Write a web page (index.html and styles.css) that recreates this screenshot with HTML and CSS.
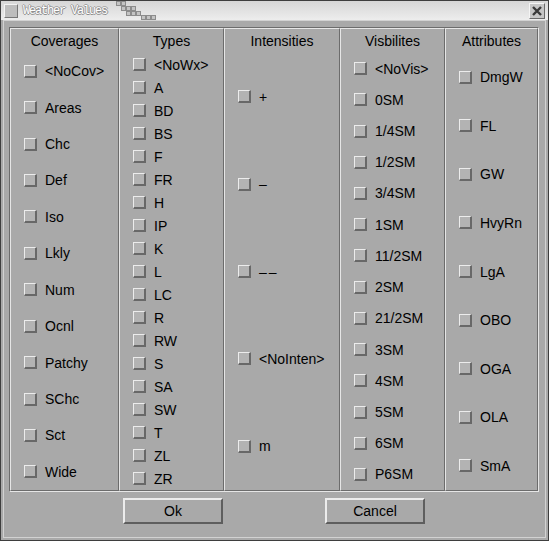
FILE: index.html
```html
<!DOCTYPE html>
<html>
<head>
  <title>Weather Values</title>
  <meta charset="UTF-8">
  <link rel="stylesheet" href="styles.css">
</head>
<body>
  <div class="window">
    <div class="titlebar">
      <span class="win-icon"></span>
      <span class="title">Weather Values</span>
      <svg class="grip" width="40" height="19" viewBox="0 0 40 19">
        <g fill="#c4c4c4" stroke="#8c8c8c" stroke-width="1">
          <rect x="0.5" y="0.5" width="4" height="4"/>
          <rect x="5.5" y="0.5" width="4" height="4"/>
          <rect x="5.5" y="5.5" width="4" height="4"/>
          <rect x="10.5" y="5.5" width="4" height="4"/>
          <rect x="15.5" y="5.5" width="4" height="4"/>
          <rect x="10.5" y="10.5" width="4" height="4"/>
          <rect x="15.5" y="10.5" width="4" height="4"/>
          <rect x="20.5" y="10.5" width="4" height="4"/>
          <rect x="25.5" y="14.5" width="4" height="4"/>
          <rect x="30.5" y="14.5" width="4" height="4"/>
          <rect x="35.5" y="14.5" width="4" height="4"/>
        </g>
      </svg>
      <span class="close">
        <svg width="12" height="12" viewBox="0 0 12 12">
          <path d="M2 2 L10 10 M10 2 L2 10" stroke="#3a3a3a" stroke-width="2.4"/>
        </svg>
      </span>
    </div>

    <div class="client">
      <div class="groups">
        <div class="group col-cov">
          <div class="group-title">Coverages</div>
          <div class="items">
            <label class="item"><span class="check"></span>&lt;NoCov&gt;</label>
            <label class="item"><span class="check"></span>Areas</label>
            <label class="item"><span class="check"></span>Chc</label>
            <label class="item"><span class="check"></span>Def</label>
            <label class="item"><span class="check"></span>Iso</label>
            <label class="item"><span class="check"></span>Lkly</label>
            <label class="item"><span class="check"></span>Num</label>
            <label class="item"><span class="check"></span>Ocnl</label>
            <label class="item"><span class="check"></span>Patchy</label>
            <label class="item"><span class="check"></span>SChc</label>
            <label class="item"><span class="check"></span>Sct</label>
            <label class="item"><span class="check"></span>Wide</label>
          </div>
        </div>

        <div class="group col-types">
          <div class="group-title">Types</div>
          <div class="items">
            <label class="item"><span class="check"></span>&lt;NoWx&gt;</label>
            <label class="item"><span class="check"></span>A</label>
            <label class="item"><span class="check"></span>BD</label>
            <label class="item"><span class="check"></span>BS</label>
            <label class="item"><span class="check"></span>F</label>
            <label class="item"><span class="check"></span>FR</label>
            <label class="item"><span class="check"></span>H</label>
            <label class="item"><span class="check"></span>IP</label>
            <label class="item"><span class="check"></span>K</label>
            <label class="item"><span class="check"></span>L</label>
            <label class="item"><span class="check"></span>LC</label>
            <label class="item"><span class="check"></span>R</label>
            <label class="item"><span class="check"></span>RW</label>
            <label class="item"><span class="check"></span>S</label>
            <label class="item"><span class="check"></span>SA</label>
            <label class="item"><span class="check"></span>SW</label>
            <label class="item"><span class="check"></span>T</label>
            <label class="item"><span class="check"></span>ZL</label>
            <label class="item"><span class="check"></span>ZR</label>
          </div>
        </div>

        <div class="group col-int">
          <div class="group-title">Intensities</div>
          <div class="items">
            <label class="item"><span class="check"></span>+</label>
            <label class="item"><span class="check"></span>–</label>
            <label class="item"><span class="check"></span><span class="dashes">––</span></label>
            <label class="item"><span class="check"></span>&lt;NoInten&gt;</label>
            <label class="item"><span class="check"></span>m</label>
          </div>
        </div>

        <div class="group col-vis">
          <div class="group-title">Visbilites</div>
          <div class="items">
            <label class="item"><span class="check"></span>&lt;NoVis&gt;</label>
            <label class="item"><span class="check"></span>0SM</label>
            <label class="item"><span class="check"></span>1/4SM</label>
            <label class="item"><span class="check"></span>1/2SM</label>
            <label class="item"><span class="check"></span>3/4SM</label>
            <label class="item"><span class="check"></span>1SM</label>
            <label class="item"><span class="check"></span>11/2SM</label>
            <label class="item"><span class="check"></span>2SM</label>
            <label class="item"><span class="check"></span>21/2SM</label>
            <label class="item"><span class="check"></span>3SM</label>
            <label class="item"><span class="check"></span>4SM</label>
            <label class="item"><span class="check"></span>5SM</label>
            <label class="item"><span class="check"></span>6SM</label>
            <label class="item"><span class="check"></span>P6SM</label>
          </div>
        </div>

        <div class="group col-attr">
          <div class="group-title">Attributes</div>
          <div class="items">
            <label class="item"><span class="check"></span>DmgW</label>
            <label class="item"><span class="check"></span>FL</label>
            <label class="item"><span class="check"></span>GW</label>
            <label class="item"><span class="check"></span>HvyRn</label>
            <label class="item"><span class="check"></span>LgA</label>
            <label class="item"><span class="check"></span>OBO</label>
            <label class="item"><span class="check"></span>OGA</label>
            <label class="item"><span class="check"></span>OLA</label>
            <label class="item"><span class="check"></span>SmA</label>
          </div>
        </div>
      </div>

      <div class="buttons">
        <button class="btn">Ok</button>
        <button class="btn">Cancel</button>
      </div>
    </div>
  </div>
</body>
</html>
```

FILE: styles.css
```css
html, body {
  margin: 0;
  padding: 0;
}
body {
  width: 549px;
  height: 541px;
  background-color: #a9a9a9;
  font-family: 'Liberation Sans', Arial, sans-serif;
  font-size: 14px;
  color: #000;
}
.window {
  width: 549px;
  height: 541px;
  box-sizing: border-box;
  border: 1px solid #3e3e3e;
  background-color: #a9a9a9;
  display: flex;
  flex-direction: column;
}

/* title bar */
.titlebar {
  height: 19px;
  display: flex;
  align-items: center;
  background: linear-gradient(#d6d6d6, #ededed);
  padding: 0 3px 0 3px;
}
.win-icon {
  width: 12px;
  height: 12px;
  background-color: #bdbdbd;
  border-top: 1px solid #f2f2f2;
  border-left: 1px solid #f2f2f2;
  border-right: 1px solid #777;
  border-bottom: 1px solid #777;
}
.title {
  margin-left: 5px;
  font-family: 'Liberation Mono', 'DejaVu Sans Mono', monospace;
  font-size: 12px;
  letter-spacing: -1.2px;
  color: #ffffff;
  text-shadow: 1px 0 0 #8e8e8e, 0 1px 0 #8e8e8e, -1px 0 0 #a4a4a4, 0 -1px 0 #a4a4a4;
}
.grip {
  margin-left: 9px;
  align-self: flex-start;
}
.close {
  margin-left: auto;
  width: 14px;
  height: 14px;
  display: flex;
  align-items: center;
  justify-content: center;
  background-color: #c6c6c6;
  border-top: 1px solid #f4f4f4;
  border-left: 1px solid #f4f4f4;
  border-right: 1px solid #6a6a6a;
  border-bottom: 1px solid #6a6a6a;
}

/* client area */
.client {
  flex: 1;
  margin: 0 2px 2px 2px;
  border: 1px solid #d2d2d2;
  padding: 6px 6px 0 5px;
  display: flex;
  flex-direction: column;
}
.groups {
  display: flex;
  width: 528px;
  border-top: 1px solid #6c6c6c;
  border-left: 1px solid #6c6c6c;
  border-right: 1px solid #e6e6e6;
  border-bottom: 1px solid #e6e6e6;
}
.group {
  box-sizing: border-box;
  border-top: 1px solid #e6e6e6;
  border-left: 1px solid #e6e6e6;
  border-right: 1px solid #6c6c6c;
  border-bottom: 1px solid #6c6c6c;
  padding-left: 13px;
}
.col-cov { width: 109px; }
.col-types { width: 105px; }
.col-int { width: 116px; }
.col-vis { width: 105px; }
.col-attr { width: 93px; }

.group-title {
  height: 24px;
  line-height: 24px;
  text-align: center;
  margin-left: -13px;
}
.items {
  height: 437px;
  display: flex;
  flex-direction: column;
}
.item {
  flex: 1;
  display: flex;
  align-items: center;
  white-space: nowrap;
}
.check {
  width: 10px;
  height: 10px;
  margin-right: 8px;
  background-color: #b3b3b3;
  border-style: solid;
  border-width: 1px 2px 2px 1px;
  border-color: #ececec #686868 #686868 #ececec;
}
.dashes {
  letter-spacing: 2px;
}

/* buttons */
.buttons {
  display: flex;
  justify-content: center;
  gap: 102px;
  margin-top: 6px;
}
.btn {
  width: 100px;
  height: 26px;
  box-sizing: border-box;
  background-color: #a9a9a9;
  font-family: 'Liberation Sans', Arial, sans-serif;
  font-size: 14px;
  color: #000;
  border-style: solid;
  border-width: 2px;
  border-color: #ececec #5e5e5e #5e5e5e #ececec;
  padding: 0;
}
```
